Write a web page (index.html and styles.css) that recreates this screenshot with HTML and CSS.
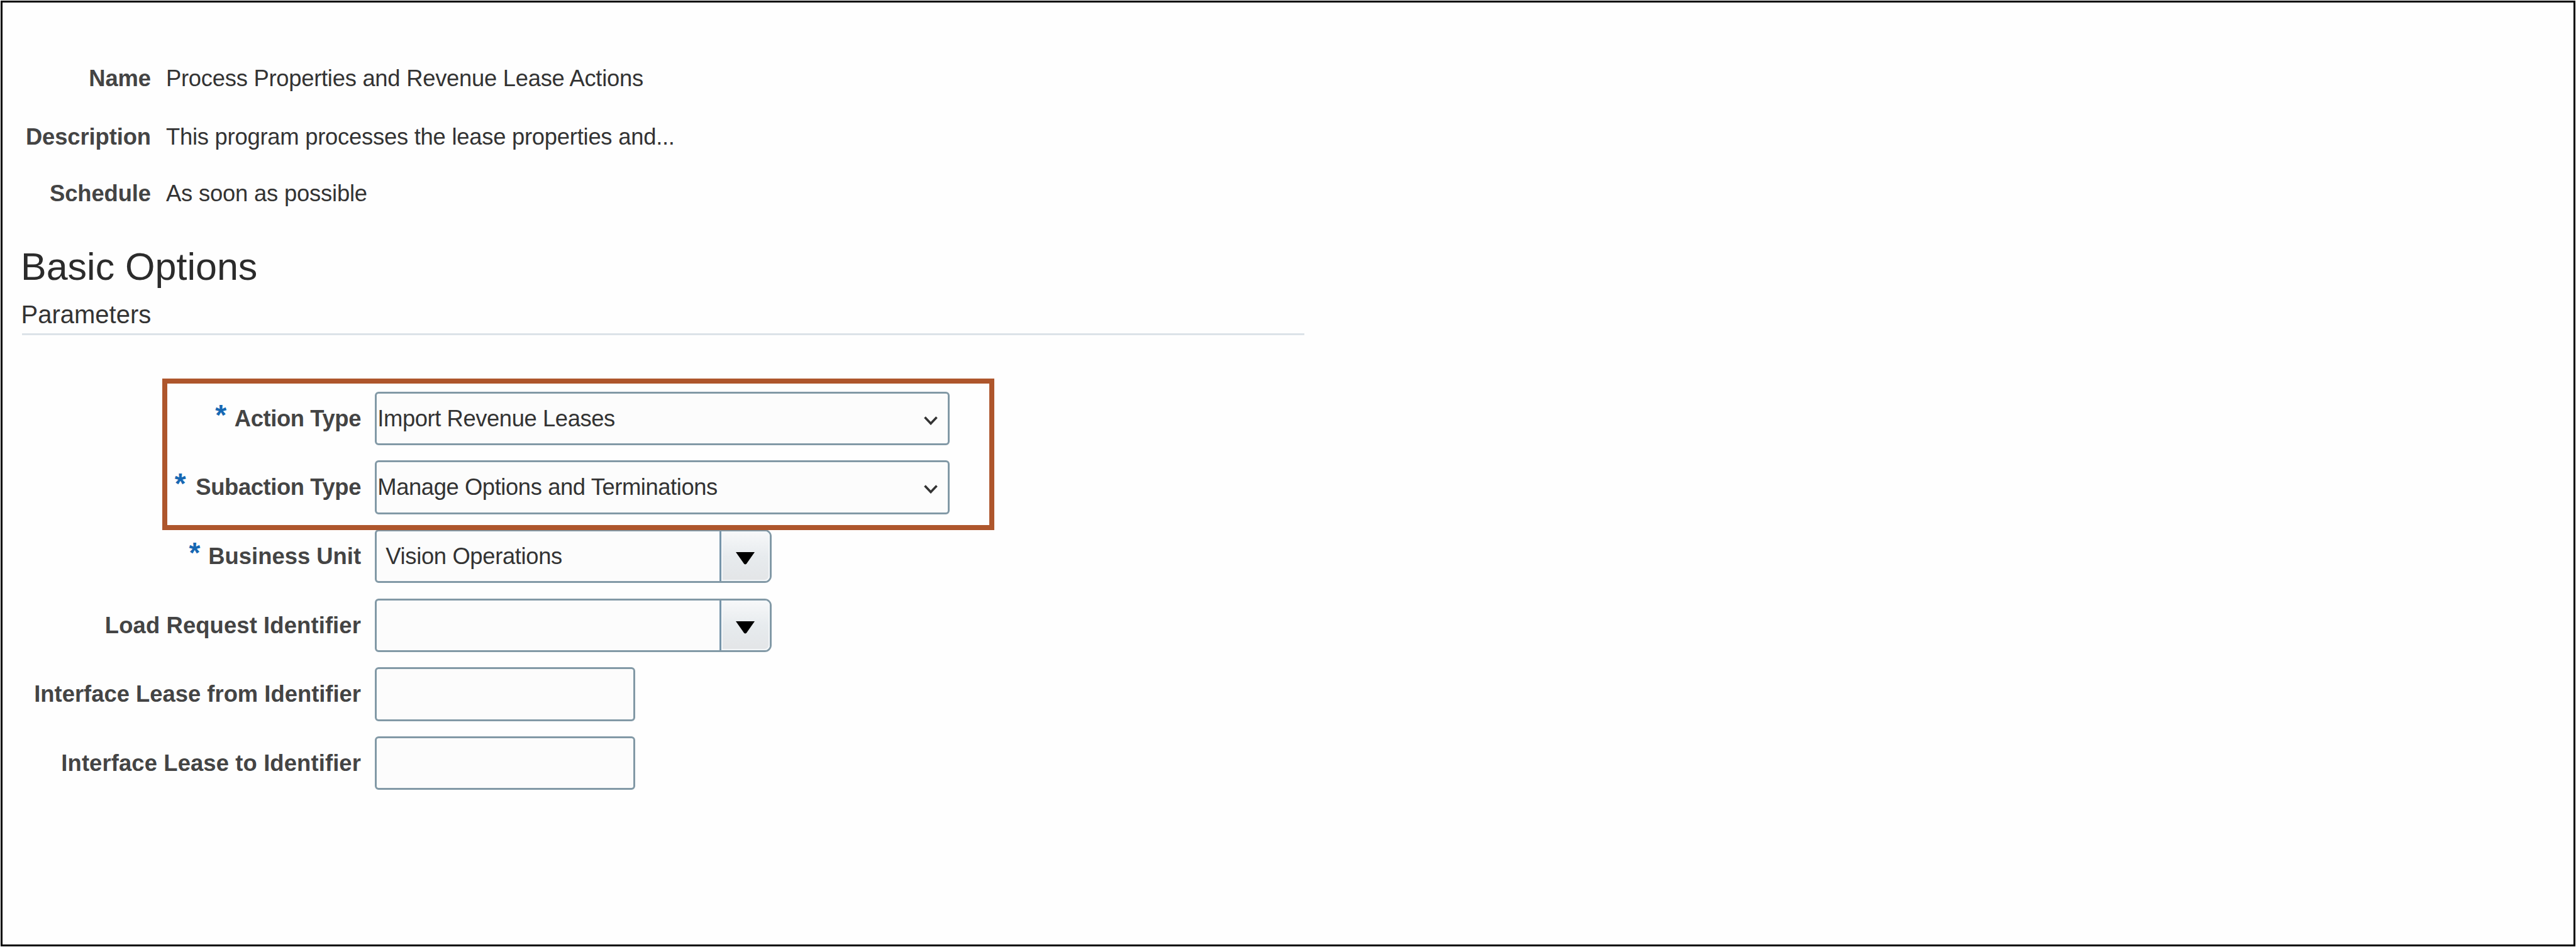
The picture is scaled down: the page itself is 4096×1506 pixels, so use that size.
FILE: index.html
```html
<!DOCTYPE html>
<html lang="en">
<head>
    <meta charset="UTF-8">
    <meta name="viewport" content="width=device-width, initial-scale=1.0">
    <title>Process Details</title>
    <link rel="stylesheet" href="styles.css">
</head>
<body>
    <main class="page">
        <!-- Process details -->
        <section class="details">
            <div class="detail-row">
                <span class="detail-label">Name</span>
                <span class="detail-value name-value">Process Properties and Revenue Lease Actions</span>
            </div>
            <div class="detail-row">
                <span class="detail-label">Description</span>
                <span class="detail-value description-value">This program processes the lease properties and...</span>
            </div>
            <div class="detail-row schedule-row">
                <span class="detail-label">Schedule</span>
                <span class="detail-value schedule-value">As soon as possible</span>
            </div>
        </section>

        <h1 class="title">Basic Options</h1>
        <h2 class="subtitle">Parameters</h2>

        <!-- Parameters -->
        <section class="form">
            <div class="required-group">
                <div class="field-row">
                    <div class="field-label tight"><span class="required">*</span>Action Type</div>
                    <div class="field select">
                        <span class="action-value">Import Revenue Leases</span>
                        <svg class="chevron" viewBox="0 0 22 14"><path d="M1.5 1.5 L11 11.5 L20.5 1.5" /></svg>
                    </div>
                </div>
                <div class="field-row">
                    <div class="field-label tight"><span class="required wide">*</span>Subaction Type</div>
                    <div class="field select">
                        <span class="subaction-value">Manage Options and Terminations</span>
                        <svg class="chevron" viewBox="0 0 22 14"><path d="M1.5 1.5 L11 11.5 L20.5 1.5" /></svg>
                    </div>
                </div>
                <div class="highlight"></div>
            </div>
            <div class="field-row">
                <div class="field-label"><span class="required">*</span>Business Unit</div>
                <div class="field combo">
                    <span class="combo-value">Vision Operations</span>
                    <div class="combo-button">
                        <svg class="arrow" viewBox="0 0 30 20"><path d="M0 0 H30 L17 18.5 Q15 20.5 13 18.5 Z" /></svg>
                    </div>
                </div>
            </div>
            <div class="field-row">
                <div class="field-label loose">Load Request Identifier</div>
                <div class="field combo">
                    <span class="combo-value"></span>
                    <div class="combo-button">
                        <svg class="arrow" viewBox="0 0 30 20"><path d="M0 0 H30 L17 18.5 Q15 20.5 13 18.5 Z" /></svg>
                    </div>
                </div>
            </div>
            <div class="field-row">
                <div class="field-label">Interface Lease from Identifier</div>
                <div class="field text"></div>
            </div>
            <div class="field-row">
                <div class="field-label loose">Interface Lease to Identifier</div>
                <div class="field text"></div>
            </div>
        </section>
    </main>
</body>
</html>
```

FILE: styles.css
```css
* {
    box-sizing: border-box;
}

body {
    margin: 0;
    background-color: #fff;
    font-family: "Liberation Sans", Arial, sans-serif;
    font-size: 36.4px;
    line-height: 40px;
    color: #333;
    overflow: hidden;
}

.page {
    margin: 1px;
    height: 1504px;
    border: 3px solid #000;
    background-color: #fefefe;
    padding: 101px 0 0 29px;
}

.details {
    display: flex;
    flex-direction: column;
    gap: 53px;
    height: 267px;
}

.detail-row {
    display: flex;
    gap: 24px;
    height: 40px;
    white-space: nowrap;
}

.schedule-row {
    margin-top: -3px;
}

.detail-label {
    width: 207px;
    text-align: right;
    font-weight: bold;
    letter-spacing: -0.1px;
    color: #444;
}

.name-value {
    letter-spacing: -0.27px;
}

.description-value {
    letter-spacing: -0.25px;
}

.schedule-value {
    letter-spacing: -0.2px;
}

.title {
    margin: 17px 0 0;
    font-size: 61px;
    line-height: 70px;
    font-weight: normal;
    color: #2b2b2b;
}

.subtitle {
    margin: 0 0 0 2px;
    width: 2039px;
    height: 74px;
    padding-top: 19px;
    font-size: 40px;
    line-height: 44px;
    font-weight: normal;
    text-indent: -1.5px;
    border-bottom: 3px solid #dce3e8;
}

.form {
    padding-top: 89.6px;
}

.required-group {
    position: relative;
}

/* Frame drawn over the action fields */
.highlight {
    position: absolute;
    top: -20.6px;
    left: 225px;
    width: 1323px;
    height: 241px;
    border: 8.4px solid #ae562c;
}

.field-row {
    display: flex;
    gap: 22.3px;
    height: 109.65px;
}

.field-label {
    display: flex;
    justify-content: flex-end;
    width: 541px;
    padding-top: 23px;
    font-weight: bold;
    color: #444;
    white-space: nowrap;
}

.tight {
    letter-spacing: -0.4px;
}

.loose {
    letter-spacing: 0.12px;
}

.required {
    margin: -6px 13px 0 0;
    font-size: 46px;
    color: #1768b3;
}

.required.wide {
    margin-right: 16px;
}

.field {
    display: flex;
    height: 85.6px;
    border: 3px solid #8299a6;
    border-radius: 6px;
    background-color: #fcfcfc;
    white-space: nowrap;
}

.select {
    width: 914px;
    justify-content: space-between;
    padding: 20px 16px 0 1px;
}

.action-value,
.subaction-value {
    letter-spacing: -0.42px;
}

.chevron {
    width: 22px;
    height: 14px;
    margin-top: 16px;
    fill: none;
    stroke: #333;
    stroke-width: 3.6;
}

.combo {
    width: 631px;
    border-radius: 6px 11px 11px 6px;
}

.combo-value {
    flex: 1;
    padding: 20px 0 0 14px;
    letter-spacing: -0.35px;
}

.combo-button {
    display: flex;
    justify-content: center;
    width: 80px;
    padding-right: 2px;
    border-left: 3px solid #7795aa;
    border-radius: 0 8px 8px 0;
    background: linear-gradient(#f7f8f9, #e7ebee 50%, #e3e5e7);
    box-shadow: inset 0 0 0 2px #f4f7f9;
}

.arrow {
    width: 30px;
    height: 20px;
    margin-top: 33px;
    fill: #000;
}

.text {
    width: 414px;
}
```
